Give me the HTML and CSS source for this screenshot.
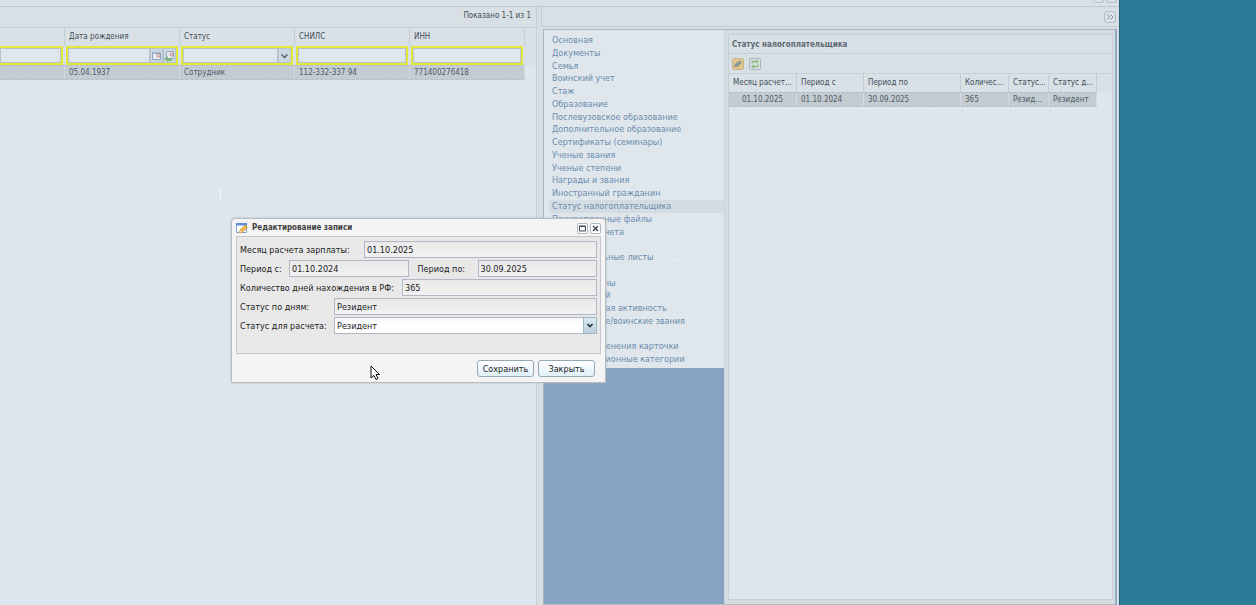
FILE: index.html
```html
<!DOCTYPE html>
<html lang="ru">
<head>
<meta charset="utf-8">
<title>Редактирование записи</title>
<link rel="stylesheet" href="styles.css">
</head>
<body>
<div class="desktop">
  <div class="app">
    <header class="app-head"><span class="tool"></span><span class="tool"></span></header>
    <div class="app-main">
      <section class="people">
        <div class="people-bar">Показано 1-1 из 1</div>
        <table class="grid people-grid">
          <colgroup><col class="p-first"><col class="p-col"><col class="p-col"><col class="p-col"><col class="p-col"><col></colgroup>
          <thead>
            <tr class="head"><th></th><th>Дата рождения</th><th>Статус</th><th>СНИЛС</th><th>ИНН</th><td></td></tr>
            <tr class="filters">
              <td class="cut"><div class="filter"><input type="text" aria-label="Фильтр"></div></td>
              <td><div class="filter"><input type="text" aria-label="Дата рождения"><button class="mini" type="button" aria-label="Выбрать дату"><svg viewBox="0 0 11 12"><path d="M1.500 2.500h8v7h-8z" fill="#e6ecf2" stroke="#8fa3c0"/><path d="M1 2h9v2H1z" fill="#9fb2cf"/><circle cx="7.500" cy="5.500" r="1.500" fill="#f0e6e8" stroke="#b98089"/></svg></button><button class="mini" type="button" aria-label="Сбросить дату"><svg viewBox="0 0 11 12"><path d="M2.500 1.500h7v7h-7z" fill="#e6ecf2" stroke="#9aabc4"/><circle cx="7.500" cy="4.500" r="1.500" fill="#f0e6e8" stroke="#b98089"/><path d="M0 9l4-3v2h4v3H4v1z" fill="#85b585"/></svg></button></div></td>
              <td><div class="filter"><input type="text" aria-label="Статус"><button class="mini arrow" type="button" aria-label="Открыть список"><svg viewBox="0 0 11 12"><path d="M2.500 4.500l3 3 3-3" fill="none" stroke="#53626d" stroke-width="1.500"/></svg></button></div></td>
              <td><div class="filter"><input type="text" aria-label="СНИЛС"></div></td>
              <td><div class="filter"><input type="text" aria-label="ИНН"></div></td>
              <td class="rest"></td>
            </tr>
          </thead>
          <tbody><tr class="picked"><td></td><td>05.04.1937</td><td>Сотрудник</td><td>112-332-337 94</td><td>771400276418</td><td class="rest"></td></tr></tbody>
        </table>
      </section>
      <section class="card">
        <div class="card-bar"><button class="fold" type="button" aria-label="Свернуть"><svg viewBox="0 0 10 10"><path d="M2 2.500L4.500 5 2 7.500M5.500 2.500L8 5 5.500 7.500" fill="none" stroke="#7f8e99"/></svg></button></div>
        <div class="card-body">
          <nav class="menu">
            <ul class="menu-list">
              <li><a href="#">Основная</a></li>
              <li><a href="#">Документы</a></li>
              <li><a href="#">Семья</a></li>
              <li><a href="#">Воинский учет</a></li>
              <li><a href="#">Стаж</a></li>
              <li><a href="#">Образование</a></li>
              <li><a href="#">Послевузовское образование</a></li>
              <li><a href="#">Дополнительное образование</a></li>
              <li><a href="#">Сертификаты (семинары)</a></li>
              <li><a href="#">Ученые звания</a></li>
              <li><a href="#">Ученые степени</a></li>
              <li><a href="#">Награды и звания</a></li>
              <li><a href="#">Иностранный гражданин</a></li>
              <li class="current"><a href="#">Статус налогоплательщика</a></li>
              <li><a href="#">Прикрепленные файлы</a></li>
              <li><a href="#">История расчета</a></li>
              <li class="row-18"><a href="#">Исполнительные листы</a></li>
              <li class="row-20"><a href="#">Льготы, смены</a></li>
              <li class="row-21"><a href="#">Список детей</a></li>
              <li class="row-22"><a href="#">Общественная активность</a></li>
              <li class="row-23"><a href="#">Специальные/воинские звания</a></li>
              <li class="row-25"><a href="#">История изменения карточки</a></li>
              <li class="row-26"><a href="#">Квалификационные категории</a></li>
            </ul>
          </nav>
          <div class="details">
            <div class="sheet">
              <h2 class="sheet-title">Статус налогоплательщика</h2>
              <div class="sheet-tools">
                <button class="square gold" type="button" aria-label="Изменить"><svg viewBox="0 0 10 10"><path d="M1.500 7.500l1-2.500 4-3 2 1.500L5 7z" fill="#c5c9bd" stroke="#7b858b"/><path d="M3 6.500l4-3" stroke="#566b80"/></svg></button>
                <button class="square" type="button" aria-label="Обновить"><svg viewBox="0 0 10 10"><path d="M2 4.500V3.500q0-1 1-1h4M8 5.500v1q0 1-1 1H3" fill="none" stroke="#86b97c" stroke-width="1.300"/><path d="M6 .5l3 2-3 2zM4 5.500l-3 2 3 2z" fill="#86b97c"/></svg></button>
              </div>
              <table class="grid tax-grid">
                <colgroup><col class="t-68"><col class="t-67"><col class="t-97"><col class="t-48"><col class="t-40"><col class="t-48"><col></colgroup>
                <thead><tr class="head"><th>Месяц расчет...</th><th>Период с</th><th>Период по</th><th>Количес...</th><th>Статус...</th><th>Статус д...</th><td></td></tr></thead>
                <tbody><tr class="picked"><td class="mid">01.10.2025</td><td>01.10.2024</td><td>30.09.2025</td><td>365</td><td>Резид...</td><td>Резидент</td><td class="rest"></td></tr></tbody>
              </table>
            </div>
          </div>
        </div>
      </section>
    </div>
  </div>

  <form class="dialog" role="dialog" aria-labelledby="dialog-title">
    <div class="dialog-head">
      <svg class="dialog-icon" viewBox="0 0 12 12"><path d="M.5 1.500h10v9H.5z" fill="#fff" stroke="#7fa0d4"/><path d="M0 1h11v2.500H0z" fill="#5f8fd6"/><path d="M3 11l1-3 5-5 2.500 2.500L6 10.500z" fill="#f3ba4d" stroke="#b78432" stroke-width=".7"/><path d="M3 11l1-3 2 2z" fill="#f7e1b5"/></svg>
      <h1 id="dialog-title">Редактирование записи</h1>
      <button class="win" type="button" aria-label="Развернуть"><svg viewBox="0 0 11 11"><path d="M2.500 3h6v5h-6zM2 3.500h7" fill="none" stroke="#3d464d"/></svg></button>
      <button class="win" type="button" aria-label="Закрыть окно"><svg viewBox="0 0 11 11"><path d="M3 3l5 5M8 3L3 8" fill="none" stroke="#3d464d" stroke-width="1.300"/></svg></button>
    </div>
    <div class="fields">
      <div class="line"><label class="l-124" for="f1">Месяц расчета зарплаты:</label><input id="f1" type="text" value="01.10.2025" readonly></div>
      <div class="line"><label class="l-49" for="f2">Период с:</label><input id="f2" type="text" value="01.10.2024" readonly><label class="l-69" for="f3">Период по:</label><input id="f3" type="text" value="30.09.2025" readonly></div>
      <div class="line"><label class="l-162" for="f4">Количество дней нахождения в РФ:</label><input id="f4" type="text" value="365" readonly></div>
      <div class="line"><label class="l-94" for="f5">Статус по дням:</label><input id="f5" type="text" value="Резидент" readonly></div>
      <div class="line"><label class="l-94" for="f6">Статус для расчета:</label><div class="combo"><select id="f6"><option>Резидент</option></select><svg class="combo-arrow" viewBox="0 0 12 14"><path d="M3.500 5.500L6 8l2.500-2.500" fill="none" stroke="#26323a" stroke-width="1.600"/></svg></div></div>
    </div>
    <div class="actions"><button class="push" type="submit">Сохранить</button><button class="push" type="button">Закрыть</button></div>
  </form>
  <i class="caret"></i>
  <i class="spark"></i>
  <svg class="pointer" viewBox="0 0 10 16"><path d="M1 1v12l3-2.500 2 4 2-1-2-4h3.500z" fill="#fff" stroke="#111"/></svg>
</div>
</body>
</html>
```

FILE: styles.css
```css
* { box-sizing: border-box; }
body {
  margin: 0;
  font: 9px/12px "DejaVu Sans Condensed", "DejaVu Sans", sans-serif;
  color: #55616b;
  background: #2b7b99;
}
button, input, select { font: inherit; color: inherit; margin: 0; padding: 0; border-radius: 0; }
button { display: flex; align-items: center; justify-content: center; }
input, select { min-width: 0; outline: 0; }
svg { display: block; flex: none; }
h1, h2 { margin: 0; font-size: 8px; line-height: 12px; }

.desktop { position: relative; display: flex; min-height: 100vh; padding-right: 136px; overflow: hidden; }
.app { flex: 1; min-width: 0; display: flex; flex-direction: column; background: #d9e1e8; border-right: 1px solid #235f78; }
.app-head { height: 7px; display: flex; justify-content: flex-end; gap: 2px; padding-right: 2px; border-bottom: 1px solid #bfc9d0; }
.tool { width: 11px; height: 3px; border: 1px solid #b4c1ca; border-top: 0; border-radius: 0 0 3px 3px; }
.app-main { flex: 1; display: flex; gap: 4px; background: #d7dfe4; }

.people { flex: 1; min-width: 0; background: #dee6ed; border-right: 1px solid #c5cfd4; }
.people-bar { height: 21px; padding: 3px 5px 0; font-size: 8px; text-align: right; color: #424c55; background: #d8e0e6; border-bottom: 1px solid #c3cdd4; }

.grid { width: 100%; table-layout: fixed; border-collapse: separate; border-spacing: 0; font-size: 8px; }
.grid th, .grid td { padding: 0 4px; text-align: left; font-weight: normal; white-space: nowrap; overflow: hidden; }
.head th, .head td { height: 18px; color: #424e57; background: #d9e1e7; }
.head th { border-right: 1px solid #c3cdd4; }
.grid .picked td { height: 15px; color: #4f5a62; background: #c4ccd3; border: 1px dashed #b4bec5; border-width: 1px 0; border-right: 1px solid #d3dbe1; }
.grid .picked td.rest { background: none; border: 0; }
.p-first { width: 65px; }
.p-col { width: 115px; }
.grid .filters td { height: 19px; padding: 0 2px 0 1px; background: #d8e0e7; }
.grid .filters td.cut { padding-left: 0; }
.filters .cut .filter { border-left: 0; }
.filter { height: 19px; display: flex; border: 2px solid #e2e73c; background: #dfe7ed; }
.filter input { flex: 1; width: 0; border: 1px solid #b8c2cd; background: none; }
.mini { width: 13px; border: 1px solid #b6c4ce; background: #cdd9e1; }
.mini svg { width: 11px; height: 12px; }

.card { width: 578px; flex: none; display: flex; flex-direction: column; padding-right: 1px; }
.card-bar { height: 20px; display: flex; align-items: center; justify-content: flex-end; padding-right: 2px; background: #d8e0e6; border: 1px solid #c2ccd3; border-width: 0 0 1px 1px; }
.fold { width: 12px; height: 12px; border: 1px solid #b0bec8; border-radius: 3px; background: #dce4ea; }
.fold svg { width: 10px; height: 10px; }
.card-body { flex: 1; display: flex; margin: 2px 1px 0 2px; border: 1px solid #aab7bf; border-right: 2px solid #8fa9c4; border-bottom-color: #b0babf; background: #d5dde2; }
.menu { width: 180px; background: #87a3c3; }
.menu-list { display: grid; grid-template-rows: repeat(26, 1fr); height: 338px; margin: 0; padding: 4px 0 2px; list-style: none; background: #dfe7ec; }
.menu-list li { min-height: 0; padding-left: 8px; white-space: nowrap; }
.menu-list .current { margin-left: 5px; padding-left: 3px; background: #d3dce3; }
.menu-list a { color: #6b8cae; text-decoration: none; }
.row-18 { grid-row: 18; }
.row-20 { grid-row: 20; }
.row-21 { grid-row: 21; }
.row-22 { grid-row: 22; }
.row-23 { grid-row: 23; }
.row-25 { grid-row: 25; }
.row-26 { grid-row: 26; }
.details { flex: 1; min-width: 0; display: flex; padding: 4px 2px 4px 3px; border-left: 1px solid #c9d2d8; }
.sheet { flex: 1; min-width: 0; border: 1px solid #c5ced3; background: #dee6ed; }
.sheet-title { height: 19px; padding: 4px 3px 0; color: #5c6974; background: #d8e0e6; border-bottom: 1px solid #c5ced5; }
.sheet-tools { display: flex; align-items: center; gap: 5px; height: 20px; padding: 0 3px; background: #d8e0e6; border-bottom: 1px solid #c8d1d7; }
.square { width: 12px; height: 12px; border: 1px solid #abb8bf; border-radius: 2px; background: #d8e0e3; }
.square.gold { background: #e3c88c; border-color: #c6b68f; }
.square svg { width: 10px; height: 10px; }
.tax-grid .picked .mid { text-align: center; }
.t-68 { width: 68px; }
.t-67 { width: 67px; }
.t-97 { width: 97px; }
.t-48 { width: 48px; }
.t-40 { width: 40px; }

.dialog { position: absolute; left: 231px; top: 218px; width: 375px; padding: 3px 4px 5px; color: #1c1c1c; background: #f4f4f4; border: 1px solid #b9bcbe; border-radius: 4px 4px 1px 1px; box-shadow: 0 0 2px #aab3ba; }
.dialog-head { display: flex; align-items: center; gap: 2px; height: 12px; }
.dialog-head h1 { flex: 1; padding-left: 2px; color: #404040; }
.dialog-icon { width: 12px; height: 12px; }
.win { width: 11px; height: 11px; border: 1px solid #aeb9c0; border-radius: 2px; background: #fff; }
.win svg { width: 11px; height: 11px; }
.fields { display: flex; flex-direction: column; gap: 2px; height: 118px; margin-top: 2px; padding: 4px 3px 0; background: #e8e8e8; border: 1px solid #c6c7cb; }
.line { display: flex; align-items: center; height: 17px; }
.line label { flex: none; white-space: nowrap; }
.line > input { flex: 1; height: 17px; padding: 1px 2px 0; border: 1px solid #b4b6c8; background: linear-gradient(#e9e9e9, #f1f1f1); }
.l-124 { width: 124px; }
.l-49 { width: 49px; }
.line .l-69 { width: 69px; padding-left: 9px; }
.l-162 { width: 162px; }
.l-94 { width: 94px; }
.combo { position: relative; flex: 1; }
.combo select { display: block; width: 100%; height: 17px; padding: 0 2px; appearance: none; border: 1px solid #b4b6c8; background: linear-gradient(#f3f7f8, #fff 40%); }
.combo-arrow { position: absolute; right: 0; top: 0; width: 14px; height: 17px; border: 1px solid #9fb6c3; background: linear-gradient(#dceaf0, #b9cfda); pointer-events: none; }
.actions { display: flex; justify-content: flex-end; gap: 4px; padding: 6px 6px 0; }
.push { width: 57px; height: 17px; border: 1px solid #93a8b5; border-radius: 3px; background: linear-gradient(#fff, #dff1f8); }
.caret { position: absolute; left: 220px; top: 187px; width: 1px; height: 13px; background: #f5f8fa; }
.spark { position: absolute; left: 669px; top: 260px; width: 11px; border-top: 1px dotted #f3f7fa; }
.pointer { position: absolute; left: 370px; top: 365px; width: 10px; height: 16px; }
```
